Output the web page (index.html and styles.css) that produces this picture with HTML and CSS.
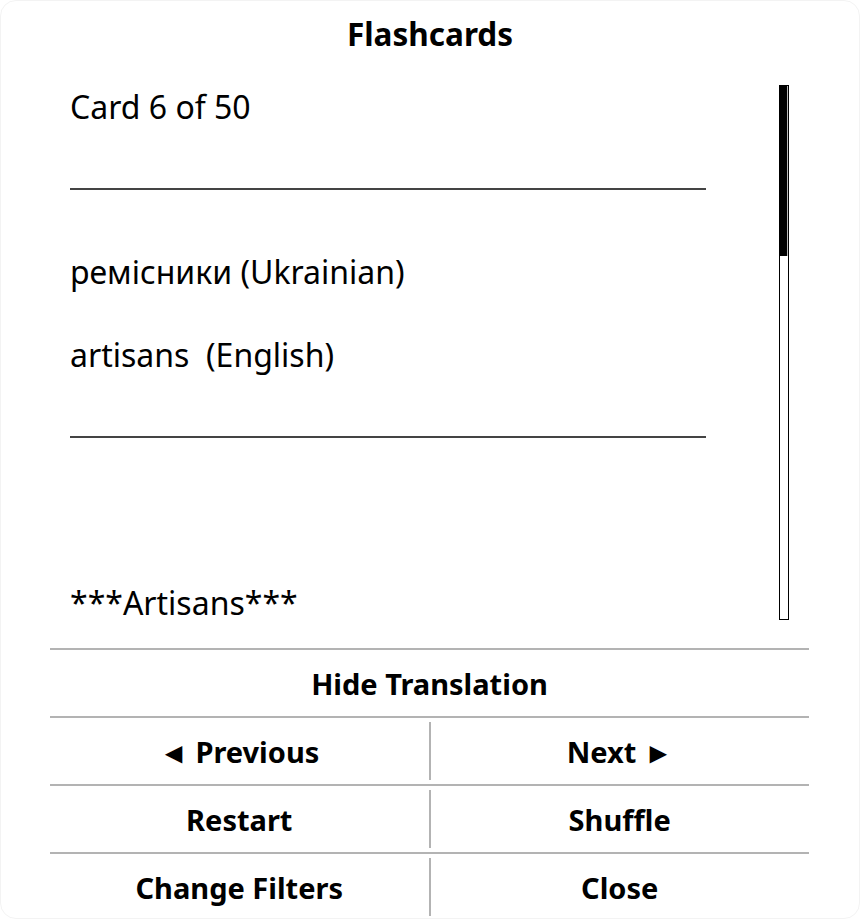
FILE: index.html
```html
<!DOCTYPE html>
<html lang="en">
<head>
<meta charset="utf-8">
<title>Flashcards</title>
<link rel="stylesheet" href="styles.css">
</head>
<body>
<div class="app">
  <h1 class="title">Flashcards</h1>
  <div class="main">
    <div class="content">
      <p class="line counter">Card 6 of 50</p>
      <hr class="rule rule-top">
      <p class="line word">ремісники (Ukrainian)</p>
      <p class="line translation">artisans&nbsp; (English)</p>
      <hr class="rule rule-bottom">
      <p class="line example">***Artisans***</p>
    </div>
    <div class="scrollbar"><div class="thumb"></div></div>
  </div>
  <div class="controls">
    <div class="row single"><button class="btn">Hide Translation</button></div>
    <div class="row pair">
      <button class="btn">◄ Previous</button>
      <span class="divider"></span>
      <button class="btn">Next ►</button>
    </div>
    <div class="row pair">
      <button class="btn">Restart</button>
      <span class="divider"></span>
      <button class="btn">Shuffle</button>
    </div>
    <div class="row pair">
      <button class="btn">Change Filters</button>
      <span class="divider"></span>
      <button class="btn">Close</button>
    </div>
  </div>
</div>
</body>
</html>
```

FILE: styles.css
```css
html, body {
  margin: 0;
  padding: 0;
  background: #ffffff;
}

body {
  font-family: "Noto Sans", "Open Sans", sans-serif;
  color: #000;
}

.app {
  box-sizing: border-box;
  width: 860px;
  height: 919px;
  border: 1px solid #f3f3f3;
  border-radius: 16px;
  display: flex;
  flex-direction: column;
  overflow: hidden;
}

.title {
  margin: 13px 0 31px;
  font-size: 31.5px;
  font-weight: 700;
  line-height: 40px;
  text-align: center;
}

.main {
  display: flex;
  height: 535px;
  padding-left: 69px;
}

.content {
  width: 636px;
}

.line {
  margin: 0;
  font-size: 32px;
  line-height: 44px;
  white-space: nowrap;
}

.rule {
  margin: 0;
  border: 0;
  height: 2px;
  background: #444;
}

.rule-top { margin-top: 59px; }
.word { margin-top: 60px; }
.translation { margin-top: 39px; }
.rule-bottom { margin-top: 59px; }
.example { margin-top: 143px; }

.scrollbar {
  box-sizing: border-box;
  margin-left: 73px;
  width: 10px;
  height: 535px;
  border: 1.5px solid #000;
  background: #fff;
}

.thumb {
  height: 170px;
  background: #000;
  border-right: 1px solid #bbb;
}

.controls {
  margin: 28px 0 0 49px;
  width: 759px;
}

.row {
  display: flex;
  height: 66px;
  border-top: 2px solid #b3b3b3;
}

.btn {
  flex: 1;
  border: 0;
  background: transparent;
  padding: 0;
  font-family: inherit;
  font-size: 29px;
  font-weight: 700;
  color: #000;
}

.divider {
  width: 2px;
  margin: 4px 0;
  background: #b3b3b3;
}
```
